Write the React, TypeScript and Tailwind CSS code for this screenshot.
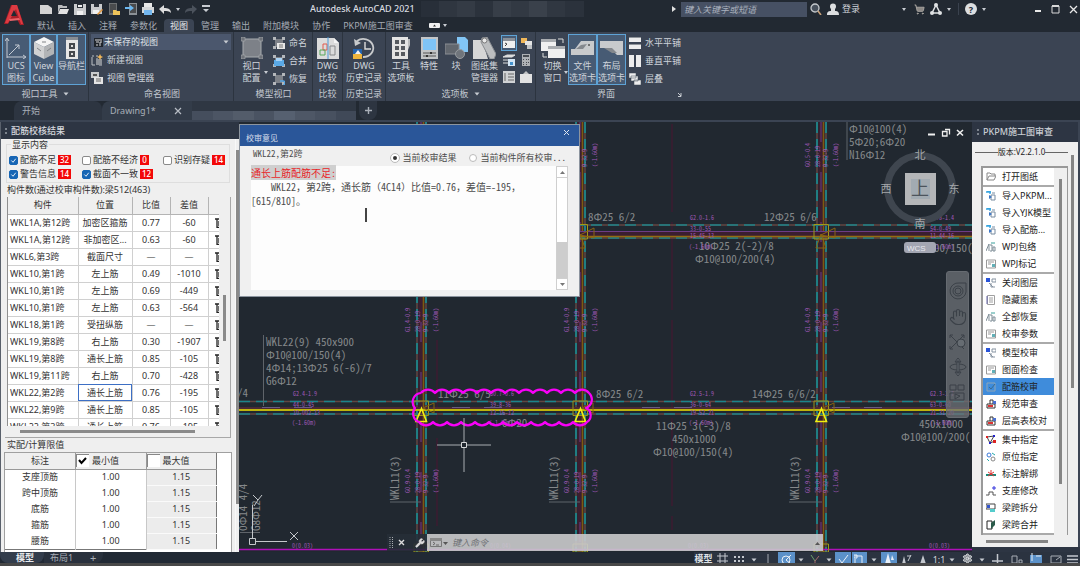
import React from "react";
import { Hand, Settings, ShoppingCart, Wrench } from "lucide-react";

type Kids = { children?: React.ReactNode };

function Ico({ w = 12, h = 12, children }: Kids & { w?: number; h?: number }) {
  return (
    <svg width={w} height={h} viewBox={`0 0 ${w} ${h}`} fill="none" aria-hidden="true" className="shrink-0">
      {children}
    </svg>
  );
}

function Caret() {
  return (
    <Ico w={6} h={4}>
      <path d="M0.5 0.5h5L3 3.5z" fill="#c8ccd2" />
    </Ico>
  );
}

function Tick() {
  return (
    <Ico w={4} h={3}>
      <path d="M0 0h4L2 3z" fill="#c8ccd2" />
    </Ico>
  );
}

/* ---------- title bar ---------- */

const quick: { name: string; icon: React.ReactNode }[] = [
  { name: "新建", icon: <path d="M0 2h8l4 3v6H0z" fill="#d4d4d4" /> },
  { name: "打开", icon: <><path d="M1 2h4l1 1h4v2H3L1 10z" fill="#b9bbbd" /><path d="M3 6h9l-2 5H1z" fill="#e3e3e3" /></> },
  { name: "保存", icon: <><path d="M0 1h12v11H0z" fill="#c9cbcd" /><path d="M3 1h6v4H3z" fill="#2a3038" /><path d="M4 2h4v2H4zM3 8h6v4H3z" fill="#f0f0f0" /></> },
  { name: "另存为", icon: <><path d="M0 1h11v10H0z" fill="#c9cbcd" /><path d="M3 1h5v3H3z" fill="#2a3038" /><path d="M2 7h6v4H2z" fill="#f0f0f0" /><path d="M6 11l5-5 1 1-5 5z" fill="#e2963a" /></> },
  { name: "从移动端打开", icon: <><path d="M1 0h8v12H1z" fill="#6d7072" /><path d="M2 1h6v9H2z" fill="#4a4c4e" /><path d="M5 7h3l1 1h3v4H5z" fill="#eec35a" /></> },
  { name: "保存到移动端", icon: <><path d="M4 0h8v12H4z" fill="#8b9196" /><path d="M5 1h6v9H5z" fill="#4a4c4e" /><path d="M0 4h5V2l4 3-4 3V6H0z" fill="#6cb8f0" /></> },
  { name: "打印", icon: <><path d="M2 0h8v4H2z" fill="#e8e8e8" /><path d="M0 4h12v6H0z" fill="#d5d7d9" /><path d="M2 7h8v5H2z" fill="#72b6ee" /></> },
  { name: "放弃", icon: <path d="M0 6l5-4v3c4 0 7 1 7 5-2-2-4-2-7-2v3z" fill="#dedede" /> },
];

function TitleBar() {
  return (
    <div className="flex h-[18px] items-center pl-[3px]">
      <div className="flex w-[200px] shrink-0 items-center gap-[5px] pl-[6px]">
        {quick.map((q) => (
          <button key={q.name} aria-label={q.name} className="shrink-0">
            <Ico>{q.icon}</Ico>
          </button>
        ))}
        <button aria-label="放弃列表" className="shrink-0"><Tick /></button>
        <button aria-label="重做" className="shrink-0"><Ico><path d="M12 6L7 2v3C3 5 0 6 0 10c2-2 4-2 7-2v3z" fill="#4b525c" /></Ico></button>
        <button aria-label="自定义" className="shrink-0"><Ico w={8} h={8}><path d="M0 0h8v2H0zM1 4h6L4 7z" fill="#c8ccd2" /></Ico></button>
      </div>
      <div className="flex min-w-0 flex-1 items-center pl-[76px]">
        <h1 className="shrink-0 text-[9px] font-medium leading-[12px] text-[#dadde1]">Autodesk AutoCAD 2021</h1>
        <div className="ml-[6px] grid h-[16px] w-[163px] shrink-0 grid-cols-9">
          <i className="bg-[#282f39]" /><i className="bg-[#2f3640]" /><i className="bg-[#343b45]" /><i className="bg-[#2b323c]" />
          <i className="bg-[#373e48]" /><i className="bg-[#323943]" /><i className="bg-[#3a414b]" /><i className="bg-[#303741]" /><i className="bg-[#2b323c]" />
        </div>
      </div>
      <Ico w={4} h={6}><path d="M0 0l4 3-4 3z" fill="#e0e0e0" /></Ico>
      <input
        aria-label="键入关键字或短语"
        placeholder="键入关键字或短语"
        className="ml-[5px] h-[15px] w-[126px] bg-[#465063] px-[3px] text-[9px] italic text-[#cfd3da] outline-none placeholder:text-[#aab1bd]"
      />
      <button aria-label="搜索" className="ml-[3px]">
        <Ico><circle cx="5" cy="5" r="4" stroke="#c4c8cc" strokeWidth="1.3" fill="#47505c" /><path d="M8 8l3 4" stroke="#c9a27a" strokeWidth="1.6" /></Ico>
      </button>
      <button className="ml-[5px] flex items-center gap-[3px] whitespace-nowrap text-[9px] text-[#d0d4da]">
        <Ico><circle cx="6" cy="3.5" r="3" fill="#dcdee0" /><path d="M4 6h4v2c3 0 4 1 4 4H0C0 9 1 8 4 8z" fill="#dcdee0" /></Ico>
        登录
      </button>
      <div className="ml-[42px] flex items-center gap-[8px]">
        <Tick />
        <button aria-label="商店"><ShoppingCart size={11} color="#aaa6a2" fill="#8b8885" /></button>
      </div>
      <button aria-label="应用" className="ml-[5px] flex items-center gap-[5px]">
        <Ico><path d="M6 2L2 10h8z" stroke="#e0e2e4" strokeWidth="1.5" /><circle cx="6" cy="2" r="2" fill="#e0e2e4" /><circle cx="2" cy="10" r="2" fill="#e0e2e4" /><circle cx="10" cy="10" r="2" fill="#e0e2e4" /></Ico>
        <Tick />
      </button>
      <i className="ml-[7px] h-[12px] w-px bg-[#3a424e]" />
      <button aria-label="帮助" className="ml-[6px] flex items-center gap-[5px]">
        <span className="flex size-[12px] items-center justify-center rounded-full bg-[#dcdee0] text-[9px] font-bold leading-none text-[#232a33]">?</span>
        <Tick />
      </button>
      <div className="ml-[48px] flex items-center gap-[9px] pr-[2px]">
        <button aria-label="最小化"><Ico w={8} h={8}><path d="M1 6h6" stroke="#e8e8e8" strokeWidth="2" /></Ico></button>
        <button aria-label="最大化"><Ico w={9} h={9}><path d="M1 1h7v7H1z" stroke="#d8d8d8" /><path d="M1 1h7" stroke="#d8d8d8" strokeWidth="2" /></Ico></button>
        <button aria-label="关闭"><Ico w={9} h={9}><path d="M1 1l7 7M8 1l-7 7" stroke="#e8e8e8" strokeWidth="1.3" /></Ico></button>
      </div>
    </div>
  );
}

const menus = ["默认", "插入", "注释", "参数化", "视图", "管理", "输出", "附加模块", "协作", "PKPM施工图审查"];

function Header() {
  return (
    <header className="flex h-[32px] shrink-0 bg-[#222932]">
      <div className="w-[31px] shrink-0 pl-[4px] pt-[4px]">
        <Ico w={20} h={22}>
          <path d="M7 1h6l7 20h-4l-3-6H7l-3 5H0z" fill="#a81f28" />
          <path d="M8 1h5l6 19h-2L12 5 4 19H1z" fill="#dd3b42" />
          <path d="M10 6l3 6H7z" fill="#222932" />
          <path d="M5 15l10-1 1 2-10 1z" fill="#e8646a" />
        </Ico>
      </div>
      <div className="flex min-w-0 flex-1 flex-col justify-between">
        <TitleBar />
        <nav className="flex h-[13px] gap-px text-[9px] leading-[13px] text-[#a4aab3]">
          {menus.map((m) => (
            <button key={m} className={m === "视图" ? "rounded-t-sm bg-[#3b4453] px-[6px] text-[#e6e8eb]" : "px-[6px]"}>
              {m}
            </button>
          ))}
          <button aria-label="功能区选项" className="ml-[9px] flex items-center gap-[3px]">
            <Ico w={11} h={5}><rect width="11" height="5" rx="1" fill="#f0f0f0" /><path d="M4 3.5h3L5.5 1.5z" fill="#333" /></Ico>
            <Tick />
          </button>
        </nav>
      </div>
    </header>
  );
}

/* ---------- ribbon ---------- */

function Panel({ title, className, caret, children }: Kids & { title: string; className: string; caret?: boolean }) {
  return (
    <section className={`flex shrink-0 flex-col border-r border-[#2c343f] pt-[2px] ${className}`}>
      <div className="flex h-[53px]">{children}</div>
      <h2 className="flex items-center justify-center gap-[5px] text-[9px] font-normal leading-[14px] text-[#c3c8d0]">
        {title}
        {caret && <Caret />}
      </h2>
    </section>
  );
}

function Big({ icon, lines, className, on, menu }: { icon: React.ReactNode; lines: string[]; className: string; on?: boolean; menu?: boolean }) {
  return (
    <button
      className={`relative flex h-[51px] shrink-0 flex-col items-center border text-[9px] leading-[12px] text-[#cfd4db] ${
        on ? "border-[#5ea3d6] bg-[#475b74]" : "border-transparent"
      } ${className}`}
    >
      <span className="flex h-[25px] items-center justify-center">{icon}</span>
      {lines.map((l) => (
        <span key={l} className="whitespace-nowrap">{l}</span>
      ))}
      {menu && <span className="absolute -right-px bottom-[10px]"><Tick /></span>}
    </button>
  );
}

function Small({ icon, label }: { icon: React.ReactNode; label: string }) {
  return (
    <button className="flex h-[17px] items-center gap-[4px] whitespace-nowrap text-[9px] text-[#cfd4db]">
      {icon}
      {label}
    </button>
  );
}

const frame = <><path d="M2 2h8v8H2z" fill="#7d8188" /><path d="M0 0h3v3H0zM9 0h3v3H9zM0 9h3v3H0zM9 9h3v3H9z" fill="#b4b7bb" /></>;

function Ribbon() {
  return (
    <div className="flex h-[69px] shrink-0 overflow-hidden bg-[#3b4453]">
      <Panel title="视口工具" caret className="w-[89px] pl-[2px]">
        <Big on className="w-[28px]" lines={["UCS", "图标"]} icon={<Ico w={22} h={22}><path d="M2 21V2M0 4l2-3 2 3M2 20h18M18 18l3 2-3 2M4 18L14 8M10 8h4v4" stroke="#c4cad2" /></Ico>} />
        <Big on className="w-[27px]" lines={["View", "Cube"]} icon={<Ico w={22} h={22}><path d="M11 0l10 5-10 5L1 5z" fill="#f4f4f4" /><path d="M1 5l10 5v12L1 17z" fill="#d0d1d2" /><path d="M21 5l-10 5v12l10-5z" fill="#b2b4b6" /><path d="M4 11l4 3M14 14l4-3M9 5h4" stroke="#808386" /></Ico>} />
        <Big on className="w-[29px]" lines={["导航栏"]} icon={<Ico w={12} h={22}><path d="M0 0h12v22H0z" fill="#e6e6e6" /><path d="M0 0h12v3H0z" fill="#888d93" /><path d="M3 6h6v6H3zM3 14h6v6H3z" fill="#44484d" /><path d="M5 8h2v2H5zM5 16h2v2H5z" fill="#ddd" /></Ico>} />
      </Panel>

      <Panel title="命名视图" className="w-[145px] pl-[2px]">
        <div className="flex w-[140px] flex-col gap-px">
          <div className="relative flex h-[16px] items-center bg-[#4b576d] pl-[3px]">
            <Ico w={9} h={9}><path d="M0 0h9v9H0z" fill="#20252c" /><path d="M1 2h7M2 4h3M6 4h2M2 7h2M6 4v4" stroke="#d8d8d8" /></Ico>
            <select aria-label="命名视图" className="h-full w-full appearance-none bg-transparent pl-[1px] text-[9px] text-[#dfe3e8] outline-none">
              <option>未保存的视图</option>
            </select>
            <span className="pointer-events-none absolute right-[2px] top-[6px]"><Caret /></span>
          </div>
          <Small label="新建视图" icon={<Ico><path d="M1 2h2M5 2h2M1 11h3M8 11h3M1 3v8M6 4v4h4" stroke="#bcc0c5" /><path d="M5 5h6v6H5z" fill="#8c9198" /><path d="M9 0l1 2 2 1-2 1-1 2-1-2-2-1 2-1z" fill="#f0b659" /></Ico>} />
          <Small label="视图 管理器" icon={<Ico><path d="M0 0h8v6H0z" fill="#c9cbcd" /><path d="M2 2h4v2H2z" fill="#555" /><path d="M3 5h9v7H3z" fill="#e5e5e5" /><path d="M5 7h5M5 9h5" stroke="#666" /></Ico>} />
        </div>
      </Panel>

      <Panel title="模型视口" className="w-[79px] pl-[1px]">
        <Big menu className="w-[33px]" lines={["视口", "配置"]} icon={<Ico w={22} h={22}><path d="M2 2h18v18H2z" fill="#7d8188" stroke="#a9acb0" /><path d="M0 0h4v4H0zM18 0h4v4h-4zM0 18h4v4H0zM18 18h4v4h-4z" fill="#6e7279" stroke="#a9acb0" strokeWidth=".6" /></Ico>} />
        <div className="flex flex-col gap-px pl-[5px]">
          <Small label="命名" icon={<Ico>{frame}<path d="M4 6h8v6H4z" fill="#e8e8e8" /><path d="M6 8h4M6 10h4" stroke="#777" /></Ico>} />
          <Small label="合并" icon={<Ico>{frame}<path d="M1 5h10v6H1z" fill="#5aa9e6" /><path d="M3 3h6v3H3z" fill="#a9d3f5" /></Ico>} />
          <Small label="恢复" icon={<Ico>{frame}<path d="M7 8h3a2 2 0 0 1 0 4" stroke="#57a6e3" strokeWidth="1.5" /></Ico>} />
        </div>
      </Panel>

      <Panel title="比较" className="w-[30px]">
        <Big className="w-[29px]" lines={["DWG", "比较"]} icon={<Ico w={24} h={22}><path d="M1 1h17l5 5v16H1z" fill="#dcdcdc" /><path d="M18 1v5h5z" fill="#f5f5f5" /><path d="M7 7h4v6H7z" stroke="#e05a4e" /><path d="M4 13h5v5H4z" stroke="#59a95a" /><path d="M14 9h5v9h-5z" stroke="#88898b" /><path d="M12 0v22" stroke="#4a9ad8" /></Ico>} />
      </Panel>

      <Panel title="历史记录" className="w-[43px]">
        <Big className="w-[42px]" lines={["DWG", "历史记录"]} icon={<Ico w={24} h={22}><path d="M5 4a10 9 0 1 1 6 16" stroke="#c9cbcd" strokeWidth="1.8" /><path d="M2 2l1 7 6-3z" fill="#c9cbcd" /><path d="M13 5v7h6" stroke="#dcdcdc" strokeWidth="1.4" /><path d="M1 12h9v5H1z" fill="#2563ad" /><path d="M1 17h9v5H1z" fill="#eeb43c" /><path d="M3 17l3-4 3 4" fill="#f2f2f2" /></Ico>} />
      </Panel>

      <Panel title="选项板" caret className="w-[150px]">
        <Big className="w-[30px]" lines={["工具", "选项板"]} icon={<Ico w={18} h={22}><path d="M0 0h16v22H0z" fill="#e4e4e4" /><path d="M16 2h2v6l-2 5z" fill="#b9bbbd" /><path d="M3 3h4v4H3zM9 3h4v4H9zM3 9h4v4H3zM9 9h4v4H9zM3 15h4v4H3zM9 15h4v4H9z" fill="#565a60" /></Ico>} />
        <Big className="w-[26px]" lines={["特性"]} icon={<Ico w={17} h={22}><path d="M0 0h17v22H0z" fill="#c3c5c7" /><path d="M2 2h13v11H2z" fill="#7fc4f7" /><path d="M2 16h13M2 19h13" stroke="#555" /><path d="M9 15h2v2H9zM5 18h2v2H5z" fill="#333" /></Ico>} />
        <Big className="w-[28px]" lines={["块"]} icon={<Ico w={23} h={22}><path d="M12 0h8l3 3v12H12z" fill="#82c5f5" /><path d="M0 7h14v10H0z" fill="#62676e" stroke="#8a8e94" /><circle cx="15" cy="17" r="4.5" fill="#70757c" stroke="#979b9f" /></Ico>} />
        <Big className="w-[29px]" lines={["图纸集", "管理器"]} icon={<Ico w={23} h={22}><path d="M0 3h9l6 19H0z" fill="#d6d6d6" /><path d="M9 1l5-1 9 17-2 5h-4L8 5z" fill="#bcbec0" stroke="#8b8e92" /><circle cx="11.5" cy="3.5" r="2.5" fill="#e8e8e8" stroke="#777" /></Ico>} />
        <div className="grid h-[51px] grid-cols-2 grid-rows-3 items-center gap-x-[3px] pl-[2px]">
          <button aria-label="命令行" className="flex size-[16px] items-center justify-center border border-[#5ea3d6] bg-[#475b74]"><Ico w={12} h={10}><path d="M0 0h12v10H0z" fill="#efefef" /><path d="M0 0h12v3H0z" fill="#8b9098" /><path d="M2 5l2 1-2 2" stroke="#444" /></Ico></button>
          <button aria-label="图层"><Ico><path d="M1 1h6v5H1z" fill="#f0b85a" /><path d="M5 4h7v4H5z" fill="#e4e4e4" /><path d="M7 8h5v4H7z" fill="#bfc2c5" /></Ico></button>
          <button aria-label="图层状态" className="pl-[2px]"><Ico><path d="M0 3h9l3-2H4zM0 6h9M0 9h9" fill="#ddd" stroke="#ddd" /><path d="M5 5h7v7H5z" fill="#d5e6f4" /><path d="M7 8h3v3H7z" fill="#4592cc" /></Ico></button>
          <button aria-label="计算器"><Ico><path d="M2 0h8v12H2z" fill="#aeb1b5" /><path d="M3 1h6v2H3zM3 5h1v1H3zM6 5h1v1H6zM8 5h1v1H8zM3 8h1v1H3zM6 8h1v1H6zM8 8h1v1H8zM3 10h1v1H3zM6 10h1v1H6z" fill="#474b51" /></Ico></button>
          <button aria-label="标记集" className="pl-[2px]"><Ico><path d="M0 0h12v12H0z" fill="#d0d2d4" /><path d="M2 2v8M5 3h6M5 6h6M5 9h6" stroke="#666" /></Ico></button>
          <button aria-label="外部参照"><Ico><path d="M0 3h12v9H0z" fill="#e2e2e2" /><path d="M3 3l3-3 3 3z" fill="#c0c2c4" /></Ico></button>
        </div>
      </Panel>

      <section className="flex w-[152px] shrink-0 flex-col pl-px pt-[2px]">
        <div className="flex h-[53px]">
          <Big menu className="w-[31px]" lines={["切换", "窗口"]} icon={<Ico w={24} h={22}><path d="M0 2h15v12H0zM7 9h17v12H7z" fill="#f0f0f0" /><path d="M0 2h15v3H0zM7 9h17v3H7z" fill="#a9acb0" /><path d="M17 2h5v4M2 16v4h4" stroke="#dcdcdc" /></Ico>} />
          <Big on className="w-[29px]" lines={["文件", "选项卡"]} icon={<Ico w={24} h={16}><path d="M0 9h4l6-8h13v14H0z" fill="#c8cacc" /><path d="M5 9l5-4 6-1-4 5z" fill="#84888d" /><circle cx="18" cy="5" r="1" fill="#555" /></Ico>} />
          <Big on className="w-[29px]" lines={["布局", "选项卡"]} icon={<Ico w={24} h={16}><path d="M0 1h23v14h-6l-7-7H0z" fill="#c8cacc" /><path d="M4 8h8l5 5h-5z" fill="#84888d" /></Ico>} />
          <div className="flex flex-col gap-px pl-[3px]">
            <Small label="水平平铺" icon={<Ico><path d="M0 0h12v5H0zM0 7h12v5H0z" fill="#ededed" /><path d="M0 0h12v1H0zM0 7h12v1H0z" fill="#8f949a" /></Ico>} />
            <Small label="垂直平铺" icon={<Ico><path d="M0 0h5v12H0zM7 0h5v12H7z" fill="#ededed" /></Ico>} />
            <Small label="层叠" icon={<Ico><path d="M0 0h7v5H0zM2 3h7v5H2zM5 7h7v5H5z" fill="#ededed" stroke="#3b4453" strokeWidth=".5" /></Ico>} />
          </div>
        </div>
        <h2 className="flex items-center justify-center text-[9px] font-normal leading-[14px] text-[#c3c8d0]">
          <span className="flex-1 pl-[60px]">界面</span>
          <span className="pr-[6px]"><Ico w={5} h={5}><path d="M1 1l3 3M4 1v3.500H1" stroke="#c8ccd2" /></Ico></span>
        </h2>
      </section>
    </div>
  );
}

function DocTabs() {
  return (
    <div className="flex h-[21px] shrink-0 border-b-2 border-[#3b4453] bg-[#222932] text-[9px] text-[#a9afb8]">
      <button className="ml-[14px] h-full w-[88px] rounded-t-lg bg-[#2d3541] pl-[8px] text-left">开始</button>
      <div className="flex h-full w-[90px] items-center rounded-tl-lg bg-[#333c49] pl-[8px]">
        <button>Drawing1*</button>
        <button aria-label="关闭图形" className="ml-[18px]"><Ico w={8} h={8}><path d="M1 1l6 6M7 1L1 7" stroke="#b8bdc5" strokeWidth="1.2" /></Ico></button>
      </div>
      <div className="grid h-full w-[164px] grid-cols-8 grid-rows-2">
        <i className="col-span-8 bg-[#2f3743]" />
        <i className="bg-[#454e5d]" /><i className="bg-[#4c5564]" /><i className="bg-[#535c6a]" /><i className="bg-[#4a5362]" />
        <i className="bg-[#566070]" /><i className="bg-[#4e5766]" /><i className="bg-[#485160]" /><i className="bg-[#404958]" />
      </div>
      <button aria-label="新图形" className="ml-[3px] flex h-full w-[18px] items-center justify-center rounded-b-lg bg-[#2d3541]">
        <Ico w={7} h={7}><path d="M3.5 0v7M0 3.5h7" stroke="#a9afb8" strokeWidth="1.4" /></Ico>
      </button>
    </div>
  );
}

/* ---------- left palette ---------- */

const filters: [string, string, boolean, string][] = [
  ["配筋不足", "32", true, "w-[73px]"],
  ["配筋不经济", "0", false, "w-[81px]"],
  ["识别存疑", "14", false, "w-[66px]"],
  ["警告信息", "14", true, "w-[73px]"],
  ["截面不一致", "12", true, "w-[81px]"],
];

const results: [string, string, string, string][] = [
  ["WKL1A,第12跨", "加密区箍筋", "0.77", "-60"],
  ["WKL1A,第12跨", "非加密区...", "0.63", "-60"],
  ["WKL6,第3跨", "截面尺寸", "—", "—"],
  ["WKL10,第1跨", "左上筋", "0.49", "-1010"],
  ["WKL10,第1跨", "左上筋", "0.69", "-449"],
  ["WKL10,第1跨", "左上筋", "0.63", "-564"],
  ["WKL18,第1跨", "受扭纵筋", "—", "—"],
  ["WKL19,第8跨", "右上筋", "0.30", "-1907"],
  ["WKL19,第8跨", "通长上筋", "0.85", "-105"],
  ["WKL19,第11跨", "右上筋", "0.70", "-428"],
  ["WKL22,第2跨", "通长上筋", "0.76", "-195"],
  ["WKL22,第9跨", "通长上筋", "0.85", "-105"],
  ["WKL22,第3跨", "通长上筋", "0.76", "-195"],
];

const limits = ["支座顶筋", "跨中顶筋", "底筋", "箍筋", "腰筋"];

function LeftPalette() {
  return (
    <aside className="flex w-[239px] shrink-0 flex-col border-l border-[#59606b] bg-[#efefef] text-[9px] leading-[12px] text-[#333]">
      <h2 className="flex h-[17px] shrink-0 items-center gap-[4px] bg-[#2d3543] pl-[4px] font-medium text-[#d5d8dd]">
        <i className="h-[6px] w-[2px] border-y-2 border-dotted border-[#7c838d]" />
        配筋校核结果
      </h2>
      <div className="flex min-h-0 flex-1">
        <div className="flex min-w-0 flex-1 flex-col">
          <fieldset className="mx-[5px] border border-[#dedede] pb-px">
            <legend className="ml-[4px] px-px leading-[11px]">显示内容</legend>
            <div className="flex flex-wrap pl-[2px] pt-[3px]">
              {filters.map(([name, n, on, w]) => (
                <label key={name} className={`flex h-[14px] items-center whitespace-nowrap ${w}`}>
                  <span className="grid shrink-0 place-items-center">
                    <input type="checkbox" defaultChecked={on} className="peer col-start-1 row-start-1 size-[9px] appearance-none rounded-[2px] border border-[#8a8a8a] bg-white checked:border-[#1766b5] checked:bg-[#1766b5]" />
                    <svg viewBox="0 0 8 8" fill="none" className="pointer-events-none col-start-1 row-start-1 hidden size-[7px] peer-checked:block"><path d="M1.500 4l2 2 3-4" stroke="#fff" /></svg>
                  </span>
                  <span className="pl-[2px]">{name}</span>
                  <b className="ml-[2px] min-w-[9px] bg-[#f30808] px-[2px] text-center text-[8px] font-medium leading-[10px] text-white">{n}</b>
                </label>
              ))}
            </div>
          </fieldset>
          <p className="pl-[6px] leading-[14px]">构件数(通过校审构件数):梁512(463)</p>

          <div className="mx-[4px] flex flex-col border-b border-r border-[#a8a8a8] pl-[2px]">
            <div className="flex">
              <div className="h-[229px] w-[212px] overflow-hidden border-l border-[#8f8f8f]">
                <table className="w-[212px] table-fixed border-collapse bg-white">
                  <colgroup>
                    <col className="w-[70px]" /><col className="w-[54px]" /><col className="w-[38px]" /><col className="w-[38px]" /><col className="w-[12px]" />
                  </colgroup>
                  <thead>
                    <tr className="h-[17px] bg-[#efefef]">
                      {["构件", "位置", "比值", "差值"].map((h) => (
                        <th key={h} className="border-b border-r border-[#b4b4b4] p-0 font-normal">{h}</th>
                      ))}
                      <th className="border-b border-[#b4b4b4] p-0" aria-label="删除" />
                    </tr>
                  </thead>
                  <tbody>
                    {results.map((r, i) => (
                      <tr key={i} className="h-[17px]">
                        <td className="whitespace-nowrap border-b border-r border-[#d0d0d0] p-0 pl-[2px]">{r[0]}</td>
                        <td className={i === 10 ? "border-b border-r border-[#d0d0d0] p-0 text-center outline outline-1 -outline-offset-1 outline-[#3d6fc4]" : "border-b border-r border-[#d0d0d0] p-0 text-center"}>{r[1]}</td>
                        <td className="border-b border-r border-[#d0d0d0] p-0 text-center">{r[2]}</td>
                        <td className="border-b border-r border-[#d0d0d0] p-0 text-center">{r[3]}</td>
                        <td className="border-b border-[#d0d0d0] p-0 pl-[6px]">
                          <Ico w={5} h={11}><path d="M0 2h5M2 2v8.500h3M5 0v2M4 4v5" stroke="#222" strokeWidth="1.3" /></Ico>
                        </td>
                      </tr>
                    ))}
                  </tbody>
                </table>
              </div>
              <div className="flex flex-1 flex-col items-center pt-[98px]"><i className="h-[46px] w-[3px] bg-[#8a8a8a]" /></div>
            </div>
            <div className="flex h-[11px] items-center pl-[13px]"><i className="h-[3px] w-[175px] bg-[#8a8a8a]" /></div>
          </div>

          <p className="pl-[6px] leading-[14px]">实配/计算限值</p>
          <div className="mx-[3px] flex-1 border-l border-r border-t border-[#a0a0a0] bg-white">
            <table className="w-[212px] table-fixed border-collapse border-b border-r border-[#777]">
              <thead>
                <tr className="h-[16px] bg-[#efefef]">
                  <th className="border-b border-r border-[#999] p-0 font-normal">标注</th>
                  <th className="border-b border-r border-[#999] p-0 font-normal">
                    <label className="flex items-center gap-[3px]">
                      <span className="grid place-items-center">
                        <input type="checkbox" defaultChecked className="peer col-start-1 row-start-1 size-[13px] appearance-none border-l border-t border-[#888] bg-white" />
                        <svg viewBox="0 0 9 9" fill="none" className="pointer-events-none col-start-1 row-start-1 hidden size-[9px] peer-checked:block"><path d="M1 4l2.500 3L8 2" stroke="#000" strokeWidth="2" /></svg>
                      </span>
                      最小值
                    </label>
                  </th>
                  <th className="border-b border-[#999] p-0 font-normal">
                    <label className="flex items-center gap-[3px]">
                      <input type="checkbox" className="size-[13px] appearance-none border-l border-t border-[#888] bg-white" />
                      最大值
                    </label>
                  </th>
                </tr>
              </thead>
              <tbody>
                {limits.map((l) => (
                  <tr key={l} className="h-[16px]">
                    <td className="border-r border-[#c8c8c8] p-0 text-center">{l}</td>
                    <td className="border-r border-[#c8c8c8] p-0 text-center">1.00</td>
                    <td className="border-b border-[#fafafa] bg-[#ececec] p-0 text-center">1.15</td>
                  </tr>
                ))}
              </tbody>
            </table>
          </div>
        </div>
        <div className="w-[4px] border-l border-[#f8f8f8] pt-[11px]"><div className="h-[354px] w-[3px] bg-[#8a8a8a]" /></div>
      </div>
    </aside>
  );
}

/* ---------- drawing ---------- */

const notes: [number, number, string][] = [
  [266, 346, "WKL22(9) 450x900"], [266, 359, "Φ10@100/150(4)"], [266, 372, "4Φ14;13Φ25 6(-6)/7"], [266, 385, "G6Φ12"],
  [237, 397, "/4"], [438, 398, "11Φ25 6/5"], [502, 427, "6Φ20"],
  [588, 221, "8Φ25 6/2"], [764, 221, "12Φ25 6/6"], [699, 250, "10Φ25 2(-2)/8"], [695, 263, "Φ10@100/200(4)"],
  [596, 398, "8Φ25 6/2"], [752, 398, "14Φ25 6/6/2"], [656, 430, "11Φ25 3(-3)/8"], [672, 443, "450x1000"], [653, 456, "Φ10@100/150(4)"],
  [919, 428, "450x1000"], [901, 441, "Φ10@100/200("], [934, 252, "00/150("],
  [849, 133, "Φ10@100(4)"], [849, 146, "5Φ20;6Φ20"], [849, 159, "N16Φ12"],
];

const upright: [number, number, string][] = [
  [399, 500, "WKL11(3)"], [558, 500, "WKL11(3)"], [799, 500, "WKL11(3)"], [247, 531, "0Φ14 4/4"], [260, 531, "G8Φ12"],
];

const values: [number, number, string][] = [
  [293, 396, "G2.4-1.9"], [293, 407, "44-0-45"], [293, 415, "10-002-13"], [292, 425, "(-1.60m)"],
  [490, 396, "G0.7-0.6"], [490, 407, "39-8-36"], [490, 415, "12-16-12"], [489, 425, "(-1.60m)"],
  [690, 396, "G2.5-1.9"], [690, 407, "36-0-64"], [690, 415, "19-52-21"], [689, 425, "(-1.60m)"],
  [930, 396, "G2.3-1.7"], [930, 407, "63-0-60"], [930, 415, "21-31-20"], [930, 425, "(-1.60m)"],
  [690, 220, "G2.0-1.6"], [690, 231, "33-0-55"], [690, 238, "15-45-13"], [689, 249, "(-1.60m)"],
  [930, 220, "G1.8-1.4"], [930, 231, "54-0-49"], [930, 238, "11-44-16"], [930, 249, "(-1.60m)"],
  [292, 548, "0(0.03)"], [490, 548, "0(0.04)"], [688, 548, "0(0.03)"], [929, 548, "0(0.03)"],
];

const columns = [421, 580, 821];
const bands: [number, string][] = [[167, "G0.5-0.4"], [332, "G1.4-0.9"], [493, "G0.9-0.4"]];

const cloud =
  "M421 393" + " a9 9 0 0 1 14 0".repeat(12) +
  " a9 9 0 0 1 -3 15 a8 8 0 0 1 1 14" + " a9 9 0 0 1 -14 0".repeat(12) +
  " a9 9 0 0 1 -4 -14 a9 9 0 0 1 6 -15";

function Drawing() {
  return (
    <svg viewBox="239 122 733 430" preserveAspectRatio="xMinYMin slice" className="block h-full w-full" role="img" aria-label="梁配筋平面图">
      {[437, 672].map((x) => (
        <path key={x} d={`M${x} ${x === 672 ? 124 : 340}V530`} stroke="#4a1530" strokeWidth="1" strokeDasharray="88 10" />
      ))}
      {columns.map((c) => (
        <g key={c}>
          <path d={`M${c + 0.5} 122V552`} stroke="#3b1e30" strokeWidth="6" />
          <path d={`M${c - 4} 122V552M${c + 5} 122V552`} stroke="#634642" strokeWidth="1.5" />
          <path d={`M${c - 4} 122V552M${c + 5} 122V552`} stroke="#1b858b" strokeWidth="1.8" strokeDasharray="11 6" />
          <path d={`M${c} 122V552`} stroke="#6c3c86" strokeDasharray="20 30" />
          <path d={`M${c + 2.5} 122V552`} stroke="#7d5a10" strokeWidth="1.6" />
        </g>
      ))}
      <path d="M421 234H972" stroke="#3b1e30" strokeWidth="4" />
      <path d="M421 225H972M421 238H972M239 401.5H972M239 414H972" stroke="#634642" strokeWidth="1.4" />
      <path d="M421 225H972M421 238H972M239 401.5H972M239 414H972" stroke="#1b858b" strokeWidth="1.6" strokeDasharray="11 6" />
      <path d="M421 231.5H972" stroke="#6c3c86" />
      <path d="M421 236.5H972" stroke="#946c12" strokeWidth="1.5" />
      <path d="M239 408H972" stroke="#4a2a35" strokeWidth="2" />
      <path d="M262 407.5H972" stroke="#6a5a80" strokeDasharray="18 14 18 140" />
      <path d="M239 410H972" stroke="#bdb50c" strokeWidth="2.2" />
      <path d="M239 549.5H972" stroke="#b010b8" strokeWidth="1.3" />

      {columns.map((c) => (
        <g key={c}>
          <path d={`M${c - 7} 224.5h14.500v14.500h-14.500z`} stroke="#a09a18" fill="none" />
          <path d={`M${c} 234l-5 14h10zM${c} 235l14-7v10z`} stroke="#8a6410" fill="none" />
          <path d={`M${c - 7} 401h14.500v14.500h-14.500z`} stroke="#9b9418" fill="none" />
          <path d={`M${c + 2} 408l11-5v10z`} stroke="#8a6410" fill="none" />
          <path d={`M${c + 0.5} 408.5l-5.500 13h10.500z`} stroke="#f2ee10" strokeWidth="1.6" fill="none" />
          <path d={`M${c - 7} 544h14.500v8h-14.500z`} stroke="#9b9418" fill="none" />
        </g>
      ))}

      <path d="M263.5 335V406M847 122V160M390 502h31M549 502h31M789 502h33M240 532.5h20" stroke="#5f646a" fill="none" />
      <g fill="#85888b" fontSize="11" className="font-['Noto_Sans_Mono_CJK_SC','Liberation_Mono',monospace]">
        {notes.map(([x, y, t]) => <text key={`${x}-${y}`} x={x} y={y}>{t}</text>)}
        {upright.map(([x, y, t]) => <text key={`${x}-${y}`} transform={`translate(${x} ${y}) rotate(-90)`}>{t}</text>)}
      </g>
      <g fill="#a058b8" fontSize="6" className="font-['Noto_Sans_Mono_CJK_SC','Liberation_Mono',monospace]">
        {values.map(([x, y, t]) => <text key={`${x}-${y}`} x={x} y={y}>{t}</text>)}
        {columns.map((c) =>
          bands.map(([y, t]) => (
            <g key={`${c}-${y}`}>
              <text transform={`translate(${c - 11} ${y}) rotate(-90)`}>{t}</text>
              <text transform={`translate(${c - 1} ${y}) rotate(-90)`}>28-0-19</text>
              <text transform={`translate(${c + 7} ${y}) rotate(-90)`}>9-32-9</text>
              <text transform={`translate(${c + 17} ${y}) rotate(-90)`}>(-1.60m)</text>
            </g>
          )),
        )}
      </g>

      <path d={cloud} stroke="#f800f8" strokeWidth="2.2" fill="none" strokeLinejoin="round" />

      <path d="M437 445h24.500M466.500 445H491M464 418v24.500M464 447.500V472" stroke="#a9adb1" />
      <path d="M461.500 442.500h5v5h-5z" stroke="#d5d7d9" fill="none" />
      <path d="M249.500 538.500h6v6h-6zM256 541.500h31M252.500 538V505M290 532l8 8M298 532l-8 8M253 495l5 5 4-5M258 500l-4 6" stroke="#c4c8cb" fill="none" />

      <circle cx="920" cy="188" r="32.5" stroke="#3f464f" strokeWidth="7" fill="none" />
      <path d="M905 173h31v32h-31z" fill="#b4b6b8" />
      <path d="M911 179h19v20h-19z" fill="#a2abb2" />
      <g textAnchor="middle" className="font-['Noto_Sans_CJK_SC',sans-serif]">
        <text x="920" y="195" fontSize="18" fill="#4c545c">上</text>
        <g fontSize="11" fill="#a5a8ab">
          <text x="920" y="159">北</text><text x="920" y="228">南</text><text x="886" y="193">西</text><text x="954" y="193">东</text>
        </g>
      </g>
      <rect x="904" y="242" width="32" height="11" rx="3" fill="#a3a6b2" />
      <text x="907" y="251" fontSize="8" fill="#e8e8ee" className="font-['Liberation_Sans',sans-serif]">WCS</text>
      <path d="M928 134.5h7" stroke="#f0f0f0" strokeWidth="2" />
      <path d="M945 129.5h4.500v5M942.5 131.500h4.500v4.500h-4.500z" stroke="#f0f0f0" fill="none" strokeWidth="1.3" />
      <path d="M957 130l6 5.500M963 130l-6 5.500" stroke="#f0f0f0" strokeWidth="1.6" />
    </svg>
  );
}

function NavBar() {
  return (
    <div className="absolute right-[3px] top-[149px] flex h-[147px] w-[23px] flex-col items-center gap-[8px] rounded-[3px] border border-[#666b71] bg-[#6d7277]/75 pt-[10px] text-[#3b4148]">
      <button aria-label="全导航控制盘"><Ico w={18} h={18}><path d="M17 1v9a8 8 0 1 1-7-9z" stroke="#3b4148" /><circle cx="9" cy="9" r="5" stroke="#3b4148" /><circle cx="9" cy="9" r="3" stroke="#3b4148" /></Ico></button>
      <button aria-label="平移"><Hand size={18} strokeWidth={1.5} /></button>
      <button aria-label="缩放"><Ico w={18} h={16}><path d="M1 1l14 14M15 1L1 15M1 4V1h3M12 1h3v3M1 12v3h3" stroke="#3b4148" /><circle cx="12" cy="9" r="4" stroke="#3b4148" fill="#666c72" /></Ico></button>
      <button aria-label="动态观察"><Ico w={18} h={18}><ellipse cx="9" cy="9" rx="8" ry="3" stroke="#3b4148" /><path d="M8 3h2v12H8zM6 4l3-4 3 4zM6 14l3 4 3-4z" stroke="#3b4148" fill="#666c72" /></Ico></button>
      <button aria-label="回放"><Ico w={17} h={17}><path d="M1 1h6v5H1zM9 1h6v5H9zM1 9h14v7H1zM6 10l5 2-5 3z" stroke="#3b4148" /></Ico></button>
    </div>
  );
}

function CommandLine() {
  return (
    <div className="absolute bottom-[1px] left-[148px] flex h-[17px] w-[436px] items-center">
      <div className="flex h-full w-[40px] items-center gap-[5px] bg-[#262d37]/90 pl-[2px]">
        <Ico w={4} h={12}><path d="M1 0v12M3.5 0v12" stroke="#a9adb1" strokeDasharray="1 1" /></Ico>
        <button aria-label="关闭命令行"><Ico w={7} h={7}><path d="M1 1l5 5M6 1L1 6" stroke="#dcdcdc" strokeWidth="1.4" /></Ico></button>
        <button aria-label="自定义命令行" className="pl-[5px]"><Wrench size={10} color="#dcdcdc" fill="#dcdcdc" /></button>
      </div>
      <label className="flex h-full flex-1 items-center bg-[#cacacc]/90 pl-[3px]">
        <Ico w={18} h={9}><path d="M0.5 0.5h11v8H0.5z" stroke="#777" /><path d="M0 0h12v3H0z" fill="#888" /><path d="M3 4l2 1.500L3 7M6 7h3" stroke="#666" /><path d="M13 4h5l-2.500 3z" fill="#555" /></Ico>
        <input aria-label="键入命令" placeholder="键入命令" className="ml-[4px] min-w-0 flex-1 bg-transparent text-[9px] italic text-[#333] outline-none placeholder:text-[#6d7074]" />
        <Ico w={9} h={6}><path d="M1 5h5L3.500 2z" fill="#555" /></Ico>
      </label>
    </div>
  );
}

function ReviewDialog() {
  return (
    <div role="dialog" aria-label="校审意见" className="absolute left-0 top-[2px] flex h-[173px] w-[341px] flex-col border border-[#8d959f] bg-[#f0f0f0] font-['Noto_Sans_Mono_CJK_SC','Noto_Sans_CJK_SC',monospace] text-[#4c4c4c]">
      <div className="flex h-[21px] shrink-0 justify-between bg-[#2a5699] pl-[6px] pr-[9px] pt-[3px] text-[8px] text-[#d3dcea]">
        <h2 className="pt-[3px] font-normal leading-[13px]">校审意见</h2>
        <button aria-label="关闭校审意见" className="h-[8px]"><Ico w={7} h={7}><path d="M1 1l5 5M6 1L1 6" stroke="#dfe6f0" /></Ico></button>
      </div>
      <div className="flex h-[20px] shrink-0 items-center pl-[13px] text-[9px] leading-[12px]">
        <span className="w-[140px] pb-[4px]">WKL22,第2跨</span>
        {["当前校审结果", "当前构件所有校审..."].map((t, i) => (
          <label key={t} className="mr-[13px] flex items-center gap-[3px] whitespace-nowrap pt-[3px]">
            <input type="radio" name="scope" defaultChecked={i === 0} className="size-[8px] appearance-none rounded-full border border-[#bbb] bg-white checked:border-2 checked:border-white checked:bg-[#333] checked:outline checked:outline-1 checked:outline-[#bbb]" />
            {t}
          </label>
        ))}
      </div>
      <div className="mx-[11px] mb-[6px] flex min-h-0 flex-1 bg-[#fdfdfd]">
        <div className="flex-1 text-[10px] leading-[14px]">
          <p><mark className="bg-[#cfcfcf] text-[#e8262a]">通长上筋配筋不足:</mark></p>
          <p className="pl-[20px]">WKL22，第2跨，通长筋（4C14）比值=0.76，差值=-195，</p>
          <p>[615/810]。</p>
          <i className="ml-[114px] block h-[14px] w-[2px] bg-[#444]" />
        </div>
        <div className="flex w-[12px] flex-col border border-[#cfcfcf] bg-white">
          <button aria-label="向上滚动" className="flex h-[11px] items-center justify-center border-b border-[#cfcfcf]"><Ico w={5} h={3}><path d="M0 3h5L2.500 0z" fill="#777" /></Ico></button>
          <i className="flex-1" />
          <i className="h-[36px] bg-[#cdcdcd]" />
          <button aria-label="向下滚动" className="flex h-[11px] items-center justify-center border-t border-[#cfcfcf]"><Ico w={5} h={3}><path d="M0 0h5L2.500 3z" fill="#777" /></Ico></button>
        </div>
      </div>
    </div>
  );
}

/* ---------- right palette ---------- */

const art = {
  open: <path d="M1 8V1h3l1 1h4v2M1 8l2-4h7L8 8z" stroke="#888" />,
  imp: <><path d="M0 1h5M1 0h3v3" stroke="#35a4e0" strokeWidth="1.3" /><path d="M5 4h4v5H5zM6 2h3" stroke="#778ba0" /><path d="M3 4l3 2-3 2" fill="#3b75c4" /></>,
  wpj: <><path d="M0 9l3-7v7M4 3h2v6H4M7 5h2v4H7z" stroke="#7d8b95" /><path d="M5 1h4" stroke="#39a09a" /></>,
  mark: <><path d="M.5 1h9v8h-9zM2 3h6M2 5h3" stroke="#999" /><path d="M6 5h3v3H6z" fill="#61b0b8" /></>,
  layer: <><path d="M0 0h4v4H0z" fill="#2853d8" /><path d="M6 1h4v3H6zM3 5l4 4M5 5v4h4" stroke="#8592a0" /></>,
  hide: <><path d="M1.5.5h7v9h-7zM3 3h4M3 5h4M3 7h4" stroke="#a0a0a0" /><path d="M1 1v8" stroke="#66a" /></>,
  check: <><path d="M1 1h8v8H1z" stroke="#8fa6b8" /><path d="M3 5l2 2 4-5" stroke="#3a6c90" /></>,
  stamp: <><path d="M1 9h8V5H1zM4 5V1h3v4" stroke="#333" /><path d="M2 6h5v2H2z" fill="#d33" /><path d="M7 2h3v3H7z" fill="#4a6fd0" /></>,
  nodes: <><path d="M1 2l7-1M1 2l3 6M8 1L4 8l5-2" stroke="#444" /><path d="M0 1h2v2H0zM7 5h3v3H7z" fill="#d22" /><path d="M7 0h2v2H7zM3 7h2v2H3z" fill="#22c" /></>,
  pos: <><circle cx="3" cy="3" r="2" stroke="#3a78d8" /><circle cx="7" cy="7" r="2" stroke="#888" /><path d="M6 1l3 2M1 7l2 2" stroke="#2aa" /></>,
  unbind: <><path d="M0 6h10" stroke="#1a8a7a" strokeWidth="2" /><path d="M5 1v5M2 3l6 4M8 3L2 7" stroke="#d33" /></>,
  support: <><path d="M0 9h3V6h4v3h3" stroke="#555" /><path d="M8 0v4M6 2h4" stroke="#33d" /></>,
  split: <><path d="M0 1h9v5H0z" stroke="#444" /><path d="M1 2h3v3H1z" fill="#35c" /><path d="M4 6h5v3H4z" fill="#5cc" /></>,
  merge: <><path d="M1 1h5v8H1z" stroke="#222" /><path d="M5 3l4-3v5L5 9z" fill="#2a5a4a" /></>,
};

const groups: [keyof typeof art, string][][] = [
  [["open", "打开图纸"]],
  [["imp", "导入PKPM..."], ["imp", "导入YJK模型"], ["imp", "导入配筋..."], ["wpj", "WPJ包络"], ["mark", "WPJ标记"]],
  [["layer", "关闭图层"], ["hide", "隐藏图素"], ["wpj", "全部恢复"], ["mark", "校审参数"]],
  [["layer", "模型校审"], ["mark", "图面检查"], ["check", "配筋校审"], ["stamp", "规范审查"], ["stamp", "层高表校对"]],
  [["nodes", "集中指定"], ["pos", "原位指定"], ["unbind", "标注解绑"], ["support", "支座修改"], ["split", "梁跨拆分"], ["merge", "梁跨合并"]],
];

function RightPalette() {
  return (
    <aside className="mb-[5px] flex w-[108px] shrink-0 flex-col border-r-2 border-[#3b4453] bg-[#efefef] text-[9px] leading-[12px] text-[#222]">
      <h2 className="flex h-[20px] shrink-0 items-center gap-[4px] whitespace-nowrap bg-[#2d3543] pl-[5px] font-medium text-[#c9cdd3]">
        <i className="h-[6px] w-[2px] border-y-2 border-dotted border-[#7c838d]" />
        PKPM施工图审查
      </h2>
      <div className="flex min-h-0 flex-1">
        <div className="min-w-0 flex-1 pl-[3px]">
          <p className="flex h-[20px] items-center text-[8px] before:h-px before:flex-1 before:bg-[#666] after:h-px after:flex-1 after:bg-[#666]">版本:V2.2.1.0</p>
          <div className="ml-[6px] mt-[4px] flex border-l-2 border-r border-t-2 border-[#999]">
            <ul className="w-[71px] bg-white">
              {groups.map((g, gi) => (
                <React.Fragment key={gi}>
                  {g.map(([a, t]) => (
                    <li key={t} className="h-[17px]">
                      <button className={t === "配筋校审" ? "flex h-full w-full items-center gap-[6px] whitespace-nowrap bg-[#3f8cdb] pl-[3px]" : "flex h-full w-full items-center gap-[6px] whitespace-nowrap pl-[3px]"}>
                        <Ico w={10} h={10}>{art[a]}</Ico>
                        {t}
                      </button>
                    </li>
                  ))}
                  <li aria-hidden="true" className="h-[2px] border-t-2 border-[#aaa]" />
                </React.Fragment>
              ))}
            </ul>
            <div className="flex flex-1 justify-center bg-[#efefef] pt-[11px]"><i className="h-[305px] w-[3px] bg-[#858585]" /></div>
          </div>
          <div className="flex h-[13px] items-center pl-[11px]"><i className="h-[3px] w-[62px] bg-[#858585]" /></div>
        </div>
        <div className="w-[10px] pl-[3px] pt-[13px]"><div className="h-[233px] w-[3px] bg-[#858585]" /></div>
      </div>
    </aside>
  );
}

/* ---------- status bar ---------- */

function S({ on, label, w, children }: Kids & { on?: boolean; label: string; w: string }) {
  return (
    <button aria-label={label} className={on ? `flex h-[12px] justify-center bg-[#5b91c9] pt-px ${w}` : `flex h-[12px] justify-center pt-px ${w}`}>
      {children}
    </button>
  );
}

const drop = <span className="pt-[5px]"><Caret /></span>;

function StatusBar() {
  return (
    <footer className="flex h-[14px] shrink-0 items-start justify-between overflow-hidden border-b-[3px] border-[#484848] bg-[#212934] text-[9px] leading-[12px] text-[#a9afb8]">
      <div className="flex h-[11px]">
        <button className="h-full rounded-b-lg bg-[#333d4c] pl-[16px] pr-[10px] font-bold text-[#e8eaed]">模型</button>
        <button className="h-full bg-[#29313d] pl-[6px] pr-[10px]">布局1</button>
        <button aria-label="新建布局" className="h-full w-[20px] rounded-br-lg bg-[#29313d] text-[11px]">+</button>
      </div>
      <div className="flex h-[11px] bg-[#2b3340]">
        <button className="w-[19px] font-bold leading-[13px] text-[#dfe2e6]">模型</button>
        <S label="栅格" w="w-[18px]"><Ico w={11} h={11}><path d="M3 0v11M8 0v11M0 3h11M0 8h11" stroke="#c4c8ce" /></Ico></S>
        <S label="捕捉" w="w-[17px]"><Ico w={11} h={11}><path d="M0 3h2v2H0zM4 3h2v2H4zM8 3h2v2H8zM0 7h2v2H0zM4 7h2v2H4zM8 7h2v2H8z" fill="#c4c8ce" /></Ico></S>
        <S label="捕捉选项" w="w-[12px]">{drop}</S>
        <S label="正交" w="w-[18px]"><Ico w={8} h={11}><path d="M3 1v10h5" stroke="#a4a9b0" /></Ico></S>
        <S on label="极轴" w="w-[17px]"><Ico w={11} h={11}><circle cx="5" cy="7" r="4" stroke="#e8f0f8" /><path d="M5 7l5-5M5 7l5 4" stroke="#e8f0f8" /></Ico></S>
        <S label="极轴选项" w="w-[12px]">{drop}</S>
        <S label="等轴测" w="w-[16px]"><Ico w={10} h={11}><path d="M1 2l4 6" stroke="#6ca06c" /><path d="M9 3L5 8v3" stroke="#a46c6c" /></Ico></S>
        <S label="等轴测选项" w="w-[12px]">{drop}</S>
        <S on label="对象捕捉追踪" w="w-[16px]"><Ico w={11} h={11}><path d="M1 6l3 4 6-8" stroke="#e8f0f8" /></Ico></S>
        <i className="w-px bg-[#2b3340]" />
        <S on label="对象捕捉" w="w-[15px]"><Ico w={11} h={11}><path d="M1 3h7v8M0 2h3v3H0zM1 6v5" stroke="#e8f0f8" /></Ico></S>
        <S label="对象捕捉选项" w="w-[14px]">{drop}</S>
        <S on label="注释可见性" w="w-[16px]"><Ico w={11} h={11}><path d="M4 0l3 11H1zM8 2l2 5H7z" fill="#e8f0f8" /></Ico></S>
        <S label="自动缩放" w="w-[18px]"><Ico w={11} h={11}><path d="M3 3l2 8H1z" fill="#c4c8ce" /><path d="M7 8l3-6M6 3h4" stroke="#c4c8ce" /></Ico></S>
        <S label="注释监视" w="w-[16px]"><Ico w={9} h={11}><path d="M4 2l3 9H1z" fill="#c4c8ce" /></Ico></S>
        <button className="w-[16px] leading-[15px] text-[#d4d7db]">1:1</button>
        <S label="比例选项" w="w-[10px]">{drop}</S>
        <S label="切换工作空间" w="w-[20px]"><Settings size={11} color="#e0e2e5" fill="#8a8f96" /></S>
        <S label="工作空间选项" w="w-[10px]">{drop}</S>
        <S label="注释监视器" w="w-[20px]"><Ico w={11} h={11}><path d="M5.5 1v10M0 8h11" stroke="#c4c8ce" strokeWidth="1.5" /></Ico></S>
        <S label="隔离对象" w="w-[20px]"><Ico w={12} h={11}><path d="M1 3h5v7H1zM8 7h3v3H8z" stroke="#a9aeb5" /></Ico></S>
        <S label="硬件加速" w="w-[19px]"><Ico w={13} h={11}><path d="M0 2h12v8H0z" fill="#5b91c9" /><path d="M2 0v8M6 3h5" stroke="#e8f0f8" /></Ico></S>
        <S label="全屏显示" w="w-[19px]"><Ico w={12} h={11}><path d="M1 3h10v7H1zM6 7l4-3" stroke="#a9aeb5" /></Ico></S>
        <S label="自定义" w="w-[15px]"><Ico w={11} h={11}><path d="M0 3h11M0 6.5h11M0 10h11" stroke="#c4c8ce" strokeWidth="1.3" /></Ico></S>
      </div>
    </footer>
  );
}

export default function App() {
  return (
    <div className="flex h-screen flex-col overflow-hidden bg-[#222932] font-['Noto_Sans','Noto_Sans_CJK_SC',sans-serif]">
      <Header />
      <Ribbon />
      <DocTabs />
      <main className="flex min-h-0 flex-1 bg-[#2d3543]">
        <LeftPalette />
        <div className="relative min-w-0 flex-1 overflow-hidden bg-[#212830]">
          <Drawing />
          <ReviewDialog />
          <NavBar />
          <CommandLine />
        </div>
        <RightPalette />
      </main>
      <StatusBar />
    </div>
  );
}
